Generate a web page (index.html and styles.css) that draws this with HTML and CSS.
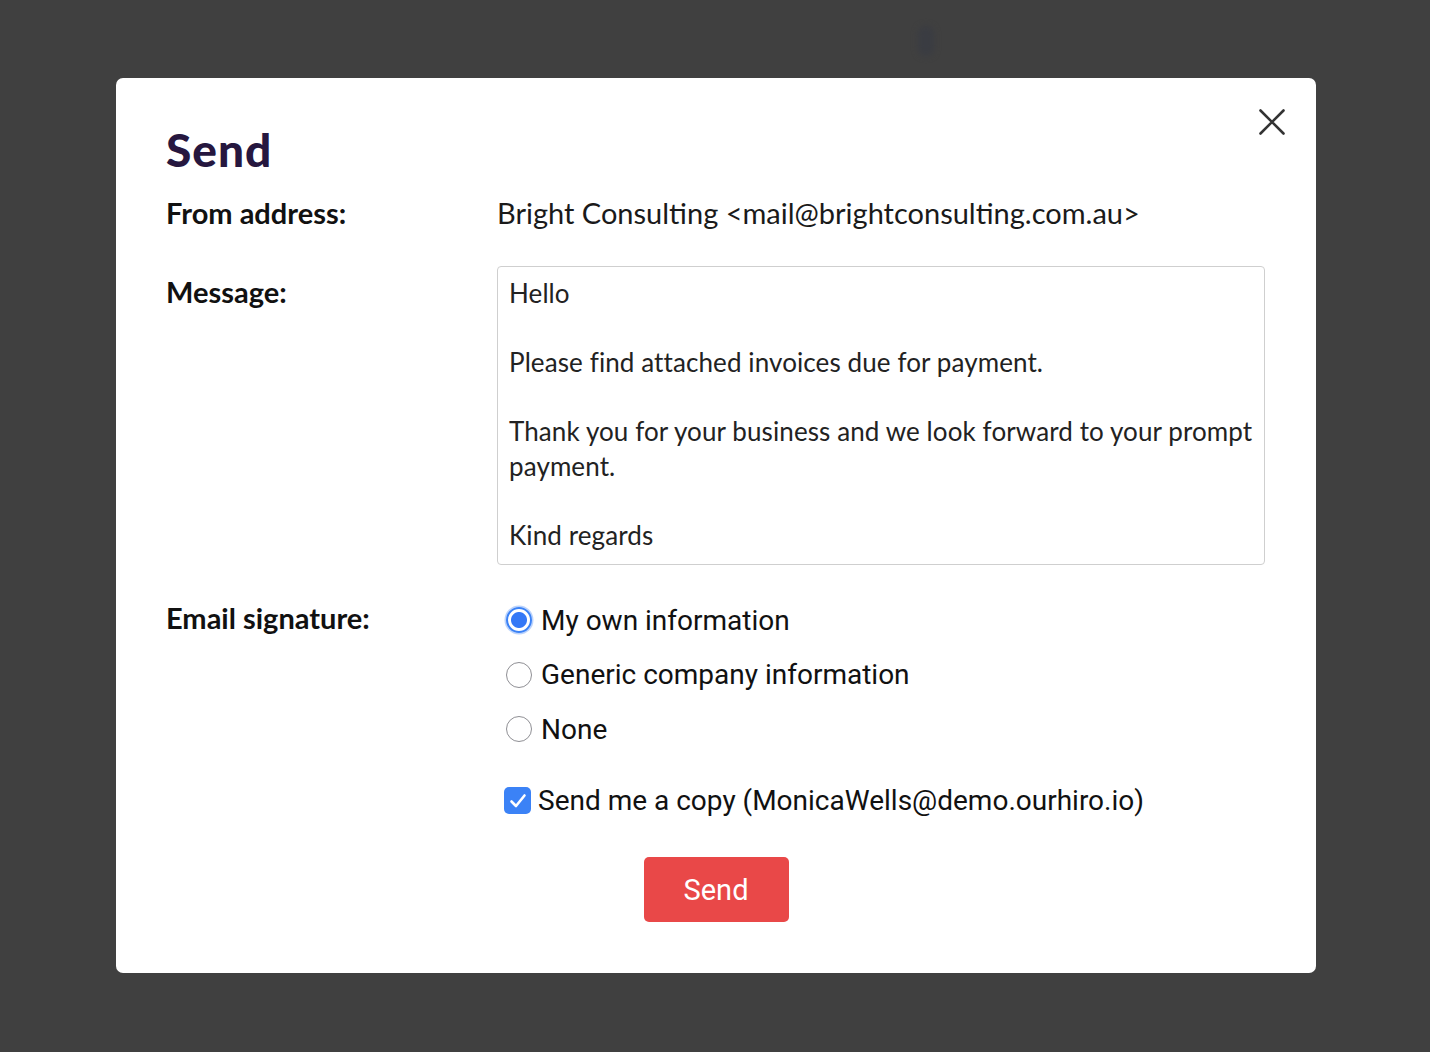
FILE: index.html
```html
<!DOCTYPE html>
<html lang="en">
<head>
<meta charset="utf-8">
<title>Send</title>
<link rel="stylesheet" href="styles.css">
</head>
<body>
<div class="overlay">
  <div class="ghost"></div>
  <div class="modal">
    <button class="close" aria-label="Close">
      <svg width="26" height="26" viewBox="0 0 26 26"><path d="M1.5 1.5 L24.5 24.5 M24.5 1.5 L1.5 24.5" stroke="#333" stroke-width="2.6" stroke-linecap="round" fill="none"/></svg>
    </button>
    <h1 class="title">Send</h1>
    <div class="form">
      <div class="label row-from">From address:</div>
      <div class="value row-from from-value">Bright Consulting &lt;mail@brightconsulting.com.au&gt;</div>

      <div class="label row-msg">Message:</div>
      <div class="message">
        <div class="line">Hello</div>
        <div class="line">&nbsp;</div>
        <div class="line">Please find attached invoices due for payment.</div>
        <div class="line">&nbsp;</div>
        <div class="line">Thank you for your business and we look forward to your prompt</div>
        <div class="line">payment.</div>
        <div class="line">&nbsp;</div>
        <div class="line">Kind regards</div>
      </div>

      <div class="label row-sig">Email signature:</div>
      <div class="options">
        <label class="radio-row"><span class="radio checked"></span><span class="opt-text">My own information</span></label>
        <label class="radio-row"><span class="radio"></span><span class="opt-text">Generic company information</span></label>
        <label class="radio-row"><span class="radio"></span><span class="opt-text">None</span></label>
        <label class="check-row"><span class="checkbox"><svg width="18" height="16" viewBox="0 0 18 16"><path d="M2.5 8.5 L7 13 L15.5 2.5" stroke="#fff" stroke-width="2.6" stroke-linecap="round" stroke-linejoin="round" fill="none"/></svg></span><span class="opt-text">Send me a copy (MonicaWells@demo.ourhiro.io)</span></label>
      </div>
    </div>
    <div class="actions">
      <button class="send-btn">Send</button>
    </div>
  </div>
</div>
</body>
</html>
```

FILE: styles.css
```css
* { box-sizing: border-box; }
html, body { margin: 0; padding: 0; }
body {
  background: #404040;
  font-family: "Lato", "Liberation Sans", sans-serif;
  color: #1a1a1a;
}
.overlay {
  position: relative;
  width: 1430px;
  height: 1052px;
  padding-top: 78px;
  padding-left: 2px;
  display: flex;
  justify-content: center;
  align-items: flex-start;
}
.ghost {
  position: absolute;
  left: 918px;
  top: 26px;
  width: 16px;
  height: 30px;
  border-radius: 8px;
  background: #3a3c42;
  filter: blur(3px);
}
.modal {
  position: relative;
  width: 1200px;
  height: 895px;
  background: #fff;
  border-radius: 7px;
  padding: 46px 50px 0 50px;
}
.close {
  position: absolute;
  right: 31px;
  top: 31px;
  width: 26px;
  height: 26px;
  padding: 0;
  border: 0;
  background: none;
  display: flex;
}
.title {
  margin: 0;
  font-family: "Lato", sans-serif;
  font-weight: 900;
  font-size: 46px;
  line-height: 52px;
  color: #26173f;
  letter-spacing: 1px;
}
.form {
  display: grid;
  grid-template-columns: 331px 768px;
  align-items: start;
  margin-top: 20px;
}
.label {
  font-weight: 700;
  font-size: 29px;
  line-height: 34px;
  color: #111;
}
.from-value {
  font-size: 29px;
  line-height: 34px;
  color: #1a1a1a;
}
.row-msg { margin-top: 45px; }
.message {
  margin-top: 36px;
  height: 299px;
  border: 1.5px solid #cfcfcf;
  border-radius: 4px;
  padding: 9px 11px;
  font-size: 26px;
  line-height: 34.6px;
  color: #222;
  letter-spacing: 0.1px;
}
.line { white-space: pre; }
.row-sig { margin-top: 36px; }
.options {
  margin-top: 28px;
  display: flex;
  flex-direction: column;
}
.radio-row, .check-row {
  display: flex;
  align-items: center;
  height: 54.5px;
  font-family: "Roboto", sans-serif;
  font-size: 28px;
  color: #111;
}
.radio-row { padding-left: 9px; }
.radio {
  width: 26px;
  height: 26px;
  border-radius: 50%;
  border: 1.5px solid #8f8f94;
  margin-right: 9px;
  flex: none;
  background: #fff;
}
.radio.checked {
  border: 2px solid #3b82f6;
  box-shadow: 0 0 0 1.5px rgba(59,130,246,0.35);
  background: radial-gradient(circle, #3478f6 0 7.5px, #fff 8.5px);
}
.check-row {
  margin-top: 17px;
  padding-left: 7px;
}
.checkbox {
  width: 27px;
  height: 27px;
  border-radius: 5px;
  background: #3b82f6;
  margin-right: 7px;
  display: flex;
  align-items: center;
  justify-content: center;
  flex: none;
}
.actions {
  display: flex;
  justify-content: center;
  margin-top: 29px;
}
.send-btn {
  width: 145px;
  height: 65px;
  background: #e94848;
  color: #fff;
  border: 0;
  border-radius: 5px;
  font-family: "Roboto", sans-serif;
  font-size: 29px;
  padding: 0;
}
```
